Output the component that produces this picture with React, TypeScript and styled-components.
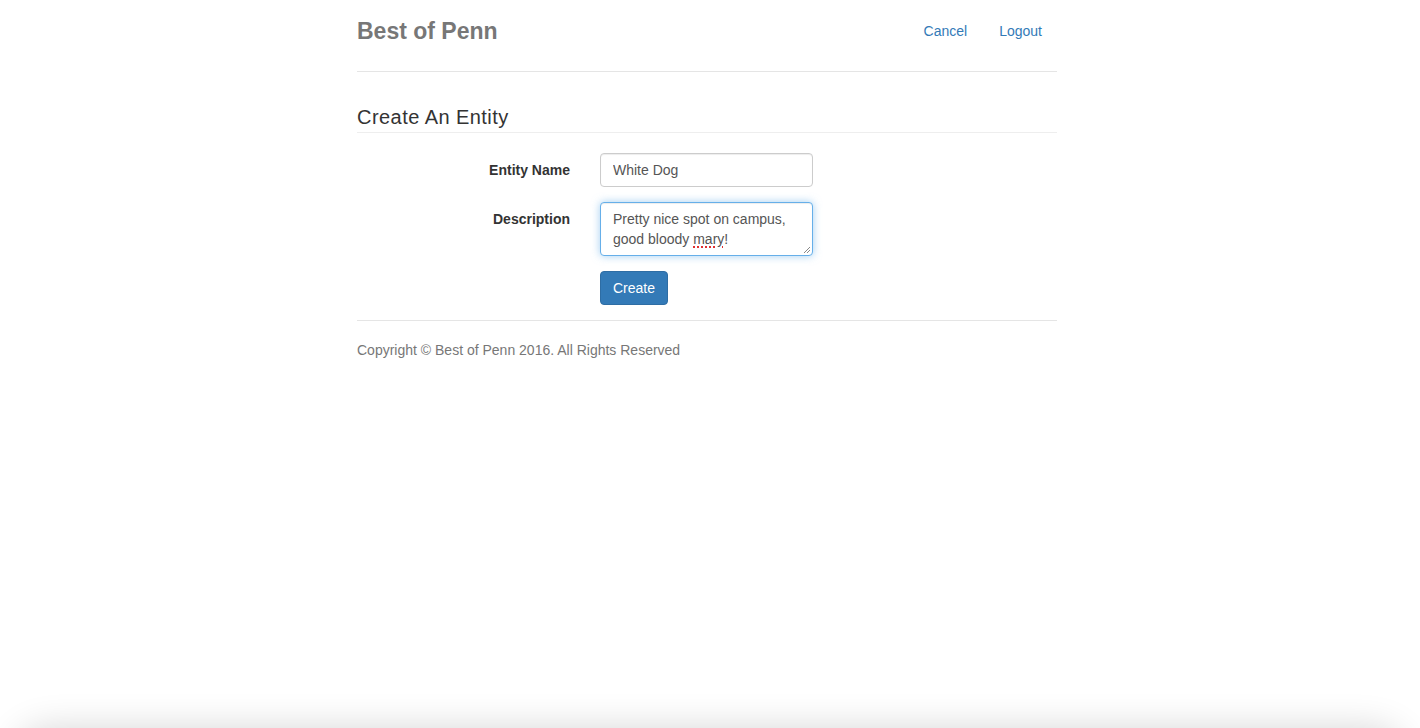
import React from "react";
import styled, { createGlobalStyle } from "styled-components";

const Global = createGlobalStyle`
  html, body { margin: 0; padding: 0; background: #fff; }
  body {
    font-family: "Liberation Sans", Arial, Helvetica, sans-serif;
    font-size: 14px;
    line-height: 20px;
    color: #333;
  }
  * { box-sizing: border-box; }
`;

const Page = styled.div`
  width: 700px;
  margin-left: calc(50% - 353px);
  padding-top: 11px;
`;

const Header = styled.header`
  display: flex;
  justify-content: space-between;
  align-items: center;
  padding-bottom: 20px;
  border-bottom: 1px solid #e5e5e5;
`;

const Brand = styled.h3`
  margin: 0;
  font-size: 23px;
  line-height: 40px;
  font-weight: 700;
  color: #777;
`;

const Nav = styled.ul`
  display: flex;
  gap: 2px;
  list-style: none;
  margin: 0;
  padding: 0;
`;

const NavLink = styled.a`
  display: block;
  padding: 10px 15px;
  line-height: 20px;
  color: #337ab7;
  text-decoration: none;
  border-radius: 4px;
`;

const PageTitle = styled.h3`
  margin: 34px 0 20px;
  padding-bottom: 3px;
  font-size: 20px;
  line-height: 23px;
  font-weight: 400;
  color: #333;
  letter-spacing: 0.45px;
  border-bottom: 1px solid #eee;
`;

const Form = styled.form`
  display: flex;
  flex-direction: column;
  gap: 15px;
  margin-bottom: 15px;
`;

const Row = styled.div`
  display: grid;
  grid-template-columns: 213px 213px;
  column-gap: 30px;
`;

const Label = styled.label`
  text-align: right;
  font-weight: 700;
  padding-top: 7px;
  line-height: 20px;
`;

const Input = styled.input`
  display: block;
  width: 213px;
  height: 34px;
  padding: 6px 12px;
  font: inherit;
  font-size: 14px;
  line-height: 20px;
  color: #555;
  background: #fff;
  border: 1px solid #ccc;
  border-radius: 4px;
  box-shadow: inset 0 1px 1px rgba(0, 0, 0, 0.075);
  outline: none;
`;

const TextBox = styled.div`
  position: relative;
  width: 213px;
  height: 54px;
  padding: 6px 12px;
  color: #555;
  line-height: 20px;
  background: #fff;
  border: 1px solid #66afe9;
  border-radius: 4px;
  box-shadow: inset 0 1px 1px rgba(0, 0, 0, 0.075), 0 0 8px rgba(102, 175, 233, 0.6);
`;

const TextLine = styled.span`
  display: block;
  white-space: nowrap;
`;

const Misspelled = styled.span`
  text-decoration: underline dotted #e03030;
  text-decoration-thickness: 2px;
  text-underline-offset: 2px;
`;

const Grip = styled.svg`
  position: absolute;
  right: 1px;
  bottom: 1px;
  width: 9px;
  height: 9px;
`;

const Button = styled.button`
  justify-self: start;
  height: 34px;
  padding: 6px 12px;
  font: inherit;
  font-size: 14px;
  line-height: 20px;
  color: #fff;
  background: #337ab7;
  border: 1px solid #2e6da4;
  border-radius: 4px;
  cursor: pointer;
`;

const Footer = styled.footer`
  padding-top: 19px;
  border-top: 1px solid #e5e5e5;
  color: #777;
`;

const WindowShadow = styled.div`
  position: fixed;
  left: 14px;
  right: 14px;
  top: 728px;
  height: 100px;
  border-radius: 36px;
  background: #fff;
  box-shadow: 0 0 36px 0 rgba(0, 0, 0, 0.16);
  pointer-events: none;
`;

export default function App() {
  return (
    <>
      <Global />
      <Page>
        <Header>
          <Brand>Best of Penn</Brand>
          <Nav>
            <li>
              <NavLink href="#">Cancel</NavLink>
            </li>
            <li>
              <NavLink href="#">Logout</NavLink>
            </li>
          </Nav>
        </Header>
        <PageTitle>Create An Entity</PageTitle>
        <Form onSubmit={(e) => e.preventDefault()}>
          <Row>
            <Label htmlFor="name">Entity Name</Label>
            <Input id="name" defaultValue="White Dog" />
          </Row>
          <Row>
            <Label>Description</Label>
            <TextBox role="textbox">
              <TextLine>Pretty nice spot on campus,</TextLine>
              <TextLine>
                good bloody <Misspelled>mary</Misspelled>!
              </TextLine>
              <Grip viewBox="0 0 9 9">
                <path d="M8 2 L2 8 M8 5 L5 8" stroke="#888" strokeWidth="1" fill="none" />
              </Grip>
            </TextBox>
          </Row>
          <Row>
            <span />
            <Button type="submit">Create</Button>
          </Row>
        </Form>
        <Footer>Copyright © Best of Penn 2016. All Rights Reserved</Footer>
      </Page>
      <WindowShadow />
    </>
  );
}
